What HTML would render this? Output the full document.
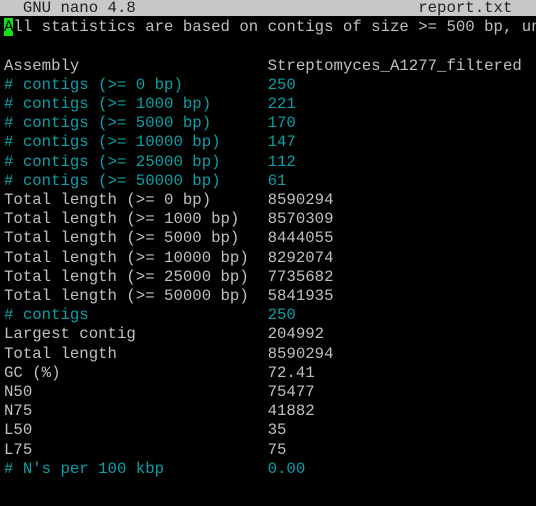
<!DOCTYPE html>
<html><head><style>
body{margin:0;background:#000;width:536px;height:506px;overflow:hidden;position:relative}
.t{position:absolute;left:0;top:0;width:536px;height:16px;background:#c8c8c8}
pre{position:absolute;left:4px;top:-1px;width:532px;overflow:hidden;margin:0;font-family:"Liberation Mono",monospace;font-size:15.7px;line-height:19.2px;color:#c0c0c0;white-space:pre}
.c{color:#0aa0a8}
.h{color:#222}
.k{background:#14e014;color:#000}
</style></head><body><div class="t"></div><pre><span class="h">  GNU nano 4.8                              report.txt</span>
<span class="k">A</span>ll statistics are based on contigs of size &gt;= 500 bp, un

Assembly                    Streptomyces_A1277_filtered
<span class="c"># contigs (&gt;= 0 bp)         250</span>
<span class="c"># contigs (&gt;= 1000 bp)      221</span>
<span class="c"># contigs (&gt;= 5000 bp)      170</span>
<span class="c"># contigs (&gt;= 10000 bp)     147</span>
<span class="c"># contigs (&gt;= 25000 bp)     112</span>
<span class="c"># contigs (&gt;= 50000 bp)     61</span>
Total length (&gt;= 0 bp)      8590294
Total length (&gt;= 1000 bp)   8570309
Total length (&gt;= 5000 bp)   8444055
Total length (&gt;= 10000 bp)  8292074
Total length (&gt;= 25000 bp)  7735682
Total length (&gt;= 50000 bp)  5841935
<span class="c"># contigs                   250</span>
Largest contig              204992
Total length                8590294
GC (%)                      72.41
N50                         75477
N75                         41882
L50                         35
L75                         75
<span class="c"># N's per 100 kbp           0.00</span>
</pre></body></html>
